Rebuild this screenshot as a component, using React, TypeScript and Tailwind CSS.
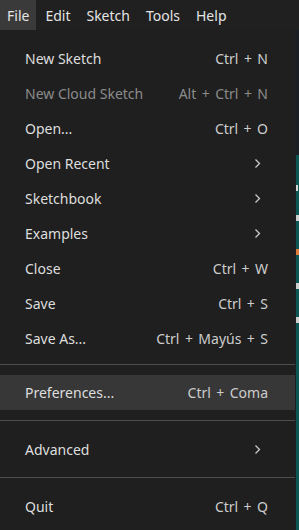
import { ReactNode } from "react";

type Item =
  | { kind: "item"; label: string; shortcut?: string; sub?: boolean; disabled?: boolean; active?: boolean }
  | { kind: "sep"; top: string; bottom: string };

const items: Item[] = [
  { kind: "item", label: "New Sketch", shortcut: "Ctrl + N" },
  { kind: "item", label: "New Cloud Sketch", shortcut: "Alt + Ctrl + N", disabled: true },
  { kind: "item", label: "Open...", shortcut: "Ctrl + O" },
  { kind: "item", label: "Open Recent", sub: true },
  { kind: "item", label: "Sketchbook", sub: true },
  { kind: "item", label: "Examples", sub: true },
  { kind: "item", label: "Close", shortcut: "Ctrl + W" },
  { kind: "item", label: "Save", shortcut: "Ctrl + S" },
  { kind: "item", label: "Save As...", shortcut: "Ctrl + Mayús + S" },
  { kind: "sep", top: "pt-[8px]", bottom: "pb-[10px]" },
  { kind: "item", label: "Preferences...", shortcut: "Ctrl + Coma", active: true },
  { kind: "sep", top: "pt-[10px]", bottom: "pb-[11px]" },
  { kind: "item", label: "Advanced", sub: true },
  { kind: "sep", top: "pt-[10px]", bottom: "pb-[11px]" },
  { kind: "item", label: "Quit", shortcut: "Ctrl + Q" },
];

const Chevron = () => (
  <svg width="7" height="11" viewBox="0 0 7 11" className="mr-[7px]">
    <path d="M1.5 1.5 L5.5 5.5 L1.5 9.5" fill="none" stroke="#c9c9c9" strokeWidth="1.3" />
  </svg>
);

const Row = ({ children, active }: { children: ReactNode; active?: boolean }) => (
  <div
    className={
      "h-[35px] flex items-center justify-between pl-[25px] pr-[27px] " +
      (active ? "bg-[#373737]" : "")
    }
  >
    {children}
  </div>
);

const App = () => {
  return (
    <div
      className="w-[299px] h-[530px] bg-[#1f1f1f] flex flex-col overflow-hidden text-[14px] text-[#e4e4e4]"
      style={{ fontFamily: '"Noto Sans", "Liberation Sans", sans-serif' }}
    >
      <div className="h-[30px] flex items-center bg-[#202020] shrink-0">
        <div className="h-full flex items-center px-[7px] bg-[#3a3a3a]">File</div>
        <div className="px-[8px] ml-[1px]">Edit</div>
        <div className="px-[8px]">Sketch</div>
        <div className="px-[8px]">Tools</div>
        <div className="px-[8px]">Help</div>
      </div>

      <div className="flex flex-1">
        <div className="w-[295px] bg-[#1f1f1f] pt-[11px]">
          {items.map((it, i) =>
            it.kind === "sep" ? (
              <div key={i} className={it.top + " " + it.bottom}>
                <div className="h-px bg-[#4d4d4d]" />
              </div>
            ) : (
              <Row key={i} active={it.active}>
                <span className={it.disabled ? "text-[#8b8b8b]" : "text-[#dedede]"}>{it.label}</span>
                {it.sub ? (
                  <Chevron />
                ) : (
                  <span
                    className={
                      "[word-spacing:1.8px] " + (it.disabled ? "text-[#8b8b8b]" : "text-[#cdcdcd]")
                    }
                  >
                    {it.shortcut}
                  </span>
                )}
              </Row>
            )
          )}
        </div>

        {/* sliver of the editor behind the menu */}
        <div className="flex-1 flex flex-col">
          <div className="h-[125px] bg-[#1b1e22]" />
          <div className="flex-1 flex">
            <div className="w-[1px] bg-[#1b1e22]" />
            <div className="flex-1 flex flex-col bg-[#0c5754]">
              <div className="h-[30px]" />
              <div className="h-[6px] bg-[#d8d8d8] w-[2px]" />
              <div className="h-[24px]" />
              <div className="h-[6px] w-[3px] bg-[#cfcfcf]" />
              <div className="h-[28px]" />
              <div className="h-[6px] w-[3px] bg-[#e07b39]" />
              <div className="h-[28px]" />
              <div className="h-[6px] w-[3px] bg-[#cfcfcf]" />
              <div className="h-[28px]" />
              <div className="h-[6px] w-[3px] bg-[#cfcfcf]" />
            </div>
          </div>
        </div>
      </div>
    </div>
  );
};

export default App;
